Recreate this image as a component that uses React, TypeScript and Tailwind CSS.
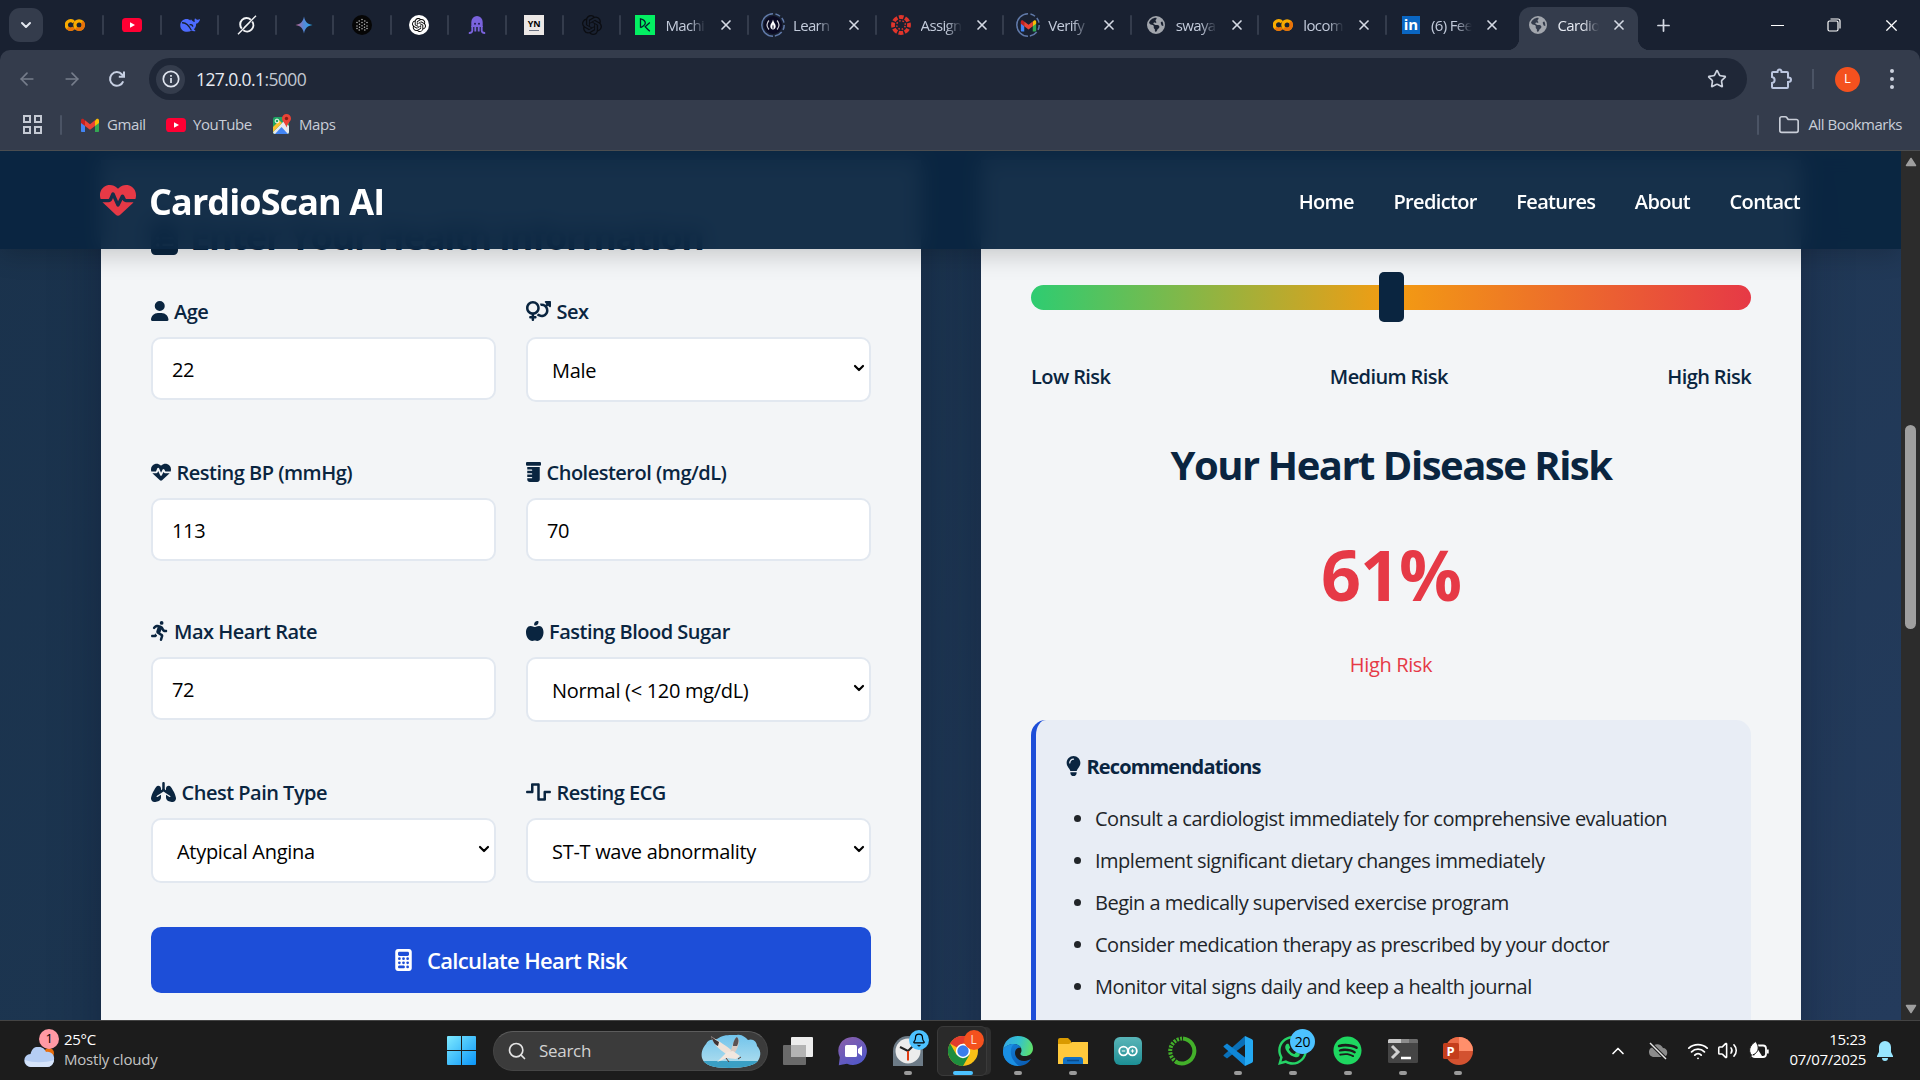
import React from "react";
import type { ReactNode } from "react";
import {
  FaHeartPulse, FaUser, FaVenusMars, FaPrescriptionBottle, FaPersonRunning, FaAppleWhole, FaLungs,
  FaWaveSquare, FaCalculator, FaLightbulb, FaSpotify, FaWhatsapp, FaEarthAmericas, FaClipboardList,
} from "react-icons/fa6";
import { SiOpenai } from "react-icons/si";
import { ChevronDown, ChevronUp, X, Plus, ArrowLeft, ArrowRight, Wifi, Volume2, Search, Folder, Star, Bell } from "lucide-react";

/* ---------- small drawings ---------- */

const Colab = () => (
  <svg viewBox="0 0 20 20" className="size-5 shrink-0" fill="none" strokeWidth="3.300">
    <path d="M8.900 7.200A4.300 4.300 0 1 0 8.900 12.800" stroke="#f9ab00" />
    <circle cx="14.100" cy="10" r="4.200" stroke="#f9ab00" />
    <path d="M17.100 7A4.200 4.200 0 0 1 11.100 13" stroke="#e8710a" />
    <path d="M2.600 13A4.300 4.300 0 0 0 8.700 13" stroke="#e8710a" />
  </svg>
);

const YouTube = () => (
  <svg viewBox="0 0 20 20" className="size-5 shrink-0">
    <rect y="3" width="20" height="14" rx="3.6" fill="#ff0033" />
    <path d="M8 7.2v5.6l5-2.8z" fill="#fff" />
  </svg>
);

const Whale = () => (
  <svg viewBox="0 0 20 20" className="size-5 shrink-0">
    <path d="M.3 10.500C.3 6.500 3.200 4 6.800 4c1.500 0 2.400.600 3.400 1.400l.8-1.100c.8 1.400 2.200 2.400 3.800 2.800-.2-1.500-.5-2.800.3-3.800.6.9 1.700 1.500 2.600 1.400.8-.1 1.300-.4 2.300-.8-.2 2.400-1.700 4.200-3.900 4.800.1 2.500-.8 4.200-2.200 5.600l1.700 1.600c-1.300.5-2.600.300-3.800-.3C6.500 18.600.3 16 .3 10.500z" fill="#4d6bfe" />
    <path d="M2 7.800c4.500-.5 7.300 3.500 9.300 7.500M9.600 9.800c1.700-.5 2.900.2 3.200 1.800" stroke="#192131" strokeWidth="1.300" fill="none" />
  </svg>
);

const Grok = () => (
  <svg viewBox="0 0 20 20" className="size-5 shrink-0" fill="none" stroke="#f2f3f5" strokeWidth="2">
    <path d="M13.800 4.800a6.300 6.300 0 0 0-9 8.800M6.300 15.200a6.300 6.300 0 0 0 8.900-8.700" />
    <path d="M19 .8L7 12.800M13 7L1 19.200" strokeWidth="1.400" />
  </svg>
);

const Gemini = () => (
  <svg viewBox="0 0 20 20" className="size-5 shrink-0">
    <defs>
      <linearGradient id="gem" x1="0" y1="0" x2="1" y2="0">
        <stop offset="0.1" stopColor="#b06a9a" />
        <stop offset="0.45" stopColor="#5b86d6" />
        <stop offset="0.9" stopColor="#2ba5e8" />
      </linearGradient>
    </defs>
    <path d="M10 1.500c.9 5 3 7.500 8.500 8.500-5.500 1-7.600 3.500-8.500 8.500-.9-5-3-7.500-8.500-8.500 5.500-1 7.600-3.500 8.500-8.500z" fill="url(#gem)" />
  </svg>
);

const Dots = () => (
  <svg viewBox="0 0 20 20" className="size-5 shrink-0">
    <circle cx="10" cy="10" r="10" fill="#060606" />
    {[[10, 4.500], [7.200, 6], [12.800, 6], [10, 7.600], [5, 7.600], [15, 7.600], [7.500, 9.200], [12.500, 9.200], [5, 11], [15, 11], [10, 10.700], [7.500, 12.300], [12.500, 12.300], [10, 13.800], [7.200, 15], [12.800, 15], [5, 13.600], [15, 13.600]].map(([x, y]) => (
      <circle key={x + "-" + y} cx={x} cy={y} r="0.750" fill="#b9b9b9" />
    ))}
  </svg>
);

const Octopus = () => (
  <svg viewBox="0 0 20 20" className="size-5 shrink-0">
    <path d="M4.300 7a5.700 5.900 0 0 1 11.400 0v5H4.300z" fill="#7a63dd" />
    <path d="M5.300 11v4.500c0 1.600-1.300 2.600-3.500 2.400M8.300 11v5.400M11.700 11v5.400M14.700 11v4.500c0 1.600 1.300 2.600 3.500 2.400" stroke="#7a63dd" strokeWidth="1.900" fill="none" />
    <circle cx="8" cy="8.800" r="1" fill="#221c4f" />
    <circle cx="12" cy="8.800" r="1" fill="#221c4f" />
  </svg>
);

const Gmail = () => (
  <svg viewBox="0 0 20 20" className="size-5 shrink-0">
    <path d="M1 6v10.200c0 .5.300.8.800.8H5V8.500z" fill="#4285f4" />
    <path d="M19 6v10.200c0 .5-.3.800-.8.800H15V8.500z" fill="#34a853" />
    <path d="M15 5.500L16.500 4C17.600 3.200 19 4 19 5.300V8l-4 3z" fill="#fbbc04" />
    <path d="M5 5.500L3.500 4C2.400 3.200 1 4 1 5.300V8l4 3z" fill="#c5221f" />
    <path d="M5 5.300l5 3.900 5-3.900V11l-5 3.800L5 11z" fill="#ea4335" />
  </svg>
);

const Maps = () => (
  <svg viewBox="0 0 20 22" className="h-[22px] w-5 shrink-0">
    <rect x="1" y="3" width="16" height="17" rx="2" fill="#1fa463" />
    <path d="M1 18L12 7l5 5v6a2 2 0 0 1-2 2H3a2 2 0 0 1-2-2z" fill="#e8eaed" />
    <path d="M3 20l6.500-7 6.500 7z" fill="#4285f4" />
    <path d="M1 13v5l9-9-2.500-2.500z" fill="#fbc02d" />
    <circle cx="5" cy="7" r="1.900" fill="none" stroke="#fff" strokeWidth="1" />
    <path d="M14.500 0a4.500 4.500 0 0 1 4.500 4.500c0 3-3 4-4.500 9-1.500-5-4.500-6-4.500-9A4.500 4.500 0 0 1 14.500 0z" fill="#ea4335" />
    <circle cx="14.500" cy="4.500" r="1.700" fill="#8a1c14" />
  </svg>
);

const Ring = ({ children }: { children: ReactNode }) => (
  <div className="relative -mx-0.5 grid size-6 shrink-0 place-items-center">
    <svg viewBox="0 0 24 24" className="absolute inset-0 size-6" fill="none" stroke="#6079a8" strokeWidth="1.500">
      <circle cx="12" cy="12" r="11.200" strokeDasharray="35 2.500 5 2.500 5 2.500 5 2.500 8 2.500" transform="rotate(90 12 12)" />
    </svg>
    {children}
  </div>
);

const Camp = () => (
  <svg viewBox="0 0 20 20" className="size-[18px]">
    <circle cx="10" cy="10" r="10" fill="#0a0a23" />
    <path d="M5.500 5c-2.600 3-2.600 7 0 10M14.500 5c2.600 3 2.600 7 0 10" stroke="#d0d0d5" strokeWidth="1.300" fill="none" />
    <path d="M10 4c.3 3 3 4.500 3 7.500 0 2-1.300 3.500-3 3.500s-3-1.500-3-3.500C7 8.500 9.700 7 10 4z" fill="#fff" />
    <path d="M10 9.500c.8 2 1 3.500 0 5.500-1-2-.8-3.500 0-5.500z" fill="#0a0a23" />
  </svg>
);

const Canvas = () => (
  <svg viewBox="0 0 20 20" className="size-5 shrink-0">
    <circle cx="10" cy="10" r="8" fill="none" stroke="#e0352b" strokeWidth="3.800" strokeDasharray="4.700 1.583" strokeDashoffset="2.350" />
    <circle cx="10" cy="10" r="4.300" fill="none" stroke="#e0352b" strokeWidth="1.500" strokeDasharray="1.500 1.877" strokeDashoffset="-1" />
  </svg>
);

const DataCamp = () => (
  <svg viewBox="0 0 20 20" className="size-5 shrink-0" fill="none">
    <rect width="20" height="20" fill="#03ef62" />
    <path d="M5.500 12.700V3.800c3 .7 4.800 2.200 4.800 4.200s-2 3.200-4.800 4.700M14.800 7.500l-4.600 4.200c1.500 1.500 2.800 3 4.600 4.600" stroke="#05192d" strokeWidth="1.300" />
  </svg>
);

const Globe = () => <FaEarthAmericas className="size-[18px] shrink-0 text-[#a2a6ad]" />;

const LinkedIn = () => (
  <div className="grid size-[18px] shrink-0 place-items-center bg-[#0a66c2] text-[15px] leading-none font-bold text-white">
    <span className="-mt-0.5">in</span>
  </div>
);

/* ---------- browser ---------- */

const pinned: ReactNode[] = [
  <Colab />, <YouTube />, <Whale />, <Grok />, <Gemini />, <Dots />,
  <div className="grid size-5 place-items-center rounded-full bg-white"><SiOpenai className="size-[14px] text-black" /></div>,
  <Octopus />,
  <div className="flex h-5 w-5 flex-col items-center bg-[#ece8e6] pt-1 text-[9px] leading-[9px] font-bold text-black">
    YN<span className="mt-0.5 h-px w-2.5 bg-gray-500" />
  </div>,
  <SiOpenai className="size-5 text-[#0b0d12]" />,
];

const tabs: [ReactNode, string][] = [
  [<DataCamp />, "Machi"],
  [<Ring><Camp /></Ring>, "Learn"],
  [<Canvas />, "Assign"],
  [<Ring><div className="grid size-[17px] place-items-center *:size-[17px]"><Gmail /></div></Ring>, "Verify"],
  [<Globe />, "swaya"],
  [<Colab />, "locom"],
  [<LinkedIn />, "(6) Fee"],
];

const TabBody = ({ icon, label }: { icon: ReactNode; label: string }) => (
  <>
    <div className="flex w-5 shrink-0 justify-center">{icon}</div>
    <span className="ml-2.5 w-[41px] shrink-0 overflow-hidden text-[15px] tracking-[-0.65px] whitespace-nowrap [mask-image:linear-gradient(to_right,#000_60%,transparent)]">{label}</span>
    <X className="ml-[12px] size-4 shrink-0 text-[#d5dae4]" strokeWidth={2.500} />
  </>
);

function TabStrip() {
  return (
    <div className="flex h-[50px] items-stretch bg-[#192131] text-[#c3cbdb]">
      <div className="ml-[9px] flex w-[38px] items-center">
        <div className="grid h-[34px] w-[34px] place-items-center rounded-[11px] bg-[#343c4c]">
          <ChevronDown className="size-4 text-[#e4e8f0]" strokeWidth={3} />
        </div>
      </div>
      {pinned.map((icon, i) => (
        <div key={i} className="flex w-[57.45px] items-center">
          <div className="flex flex-1 justify-center">{icon}</div>
          <div className="h-5 w-0.5 rounded bg-[#343c4c]" />
        </div>
      ))}
      {tabs.map(([icon, label], i) => (
        <div key={label} className="flex w-[127.6px] items-center pl-[14px]">
          <TabBody icon={icon} label={label} />
          {i < 6 && <div className="ml-auto h-5 w-0.5 rounded bg-[#343c4c]" />}
        </div>
      ))}
      <div className="relative mt-[7px] ml-1 flex w-[119px] items-center rounded-t-[12px] bg-[#343c4c] pb-[7px] pl-[9px] text-[#e6eaf2]">
        <div className="absolute bottom-0 -left-3 size-3 bg-[radial-gradient(circle_at_0_0,#192131_12px,#343c4c_12.500px)]" />
        <div className="absolute -right-3 bottom-0 size-3 bg-[radial-gradient(circle_at_100%_0,#192131_12px,#343c4c_12.500px)]" />
        <TabBody icon={<Globe />} label="Cardio" />
      </div>
      <div className="flex w-[52px] items-center justify-center"><Plus className="size-[19px] text-[#d5dae4]" strokeWidth={2.200} /></div>
      <div className="ml-auto flex items-center text-white">
        <div className="flex w-[58px] justify-center"><div className="h-px w-[13px] bg-white" /></div>
        <div className="flex w-[56px] justify-center">
          <svg viewBox="0 0 14 14" className="size-[14px]" fill="none" stroke="currentColor" strokeWidth="1.200">
            <rect x="1" y="3" width="10" height="10" rx="1.500" />
            <path d="M3.500 1h7.500a2 2 0 0 1 2 2v7.500" />
          </svg>
        </div>
        <div className="flex w-[58px] justify-center"><X className="size-[19px]" strokeWidth={1.500} /></div>
      </div>
    </div>
  );
}

function Toolbar() {
  return (
    <div className="bg-[#192131]">
      <div className="h-[100px] rounded-t-[10px] bg-[#343c4c] text-[#cdd3df]">
        <div className="flex h-[58px] items-center">
          <ArrowLeft className="ml-[17px] size-5 text-[#767d8b]" strokeWidth={2} />
          <ArrowRight className="ml-[25px] size-5 text-[#767d8b]" strokeWidth={2} />
          <svg viewBox="0 0 20 20" className="ml-[25px] size-5" fill="none" stroke="#c6cfe2" strokeWidth="2">
            <path d="M16.200 12.300A6.800 6.800 0 1 1 15 5.500l2 2M17 2.500v5.200h-5.200" />
          </svg>
          <div className="ml-[22px] flex h-[42px] w-[1598px] items-center rounded-full bg-[#1f2737]">
            <div className="ml-[7px] grid size-[29px] place-items-center rounded-full bg-[#343c4c]">
              <svg viewBox="0 0 18 18" className="size-[18px]" fill="none" stroke="#dfe4ee" strokeWidth="1.700">
                <circle cx="9" cy="9" r="7.700" />
                <path d="M9 8v5M9 5v1.700" />
              </svg>
            </div>
            <span className="ml-[11px] text-[17.500px] tracking-[-0.600px] text-[#e8ebf2]">127.0.0.1<span className="text-[#c2c7d1]">:5000</span></span>
            <Star className="mr-5 ml-auto size-5" strokeWidth={2} />
          </div>
          <svg viewBox="0 0 24 24" className="ml-[22px] size-6" fill="none" stroke="#bcc7e0" strokeWidth="2">
            <path d="M4 5h4.500c0-3.500 4-3.500 4 0H18a1 1 0 0 1 1 1v4.500c4 0 4 4.500 0 4.500v5a1 1 0 0 1-1 1H4a1 1 0 0 1-1-1v-4c3.500-.5 3.500-5.500 0-6V6a1 1 0 0 1 1-1z" />
          </svg>
          <div className="ml-[19px] h-5 w-0.5 bg-[#4b5465]" />
          <div className="ml-[21px] grid size-[25px] place-items-center rounded-full bg-[#f4511e] text-[13px] text-white">L</div>
          <div className="ml-[30px] flex flex-col gap-[4px]">
            {[0, 1, 2].map((i) => <div key={i} className="size-1 rounded-full bg-[#cdd3df]" />)}
          </div>
        </div>
        <div className="flex h-[33px] items-center text-[15px] tracking-[-0.400px] text-[#c9ced8]">
          <div className="ml-[23px] grid grid-cols-2 gap-[3px]">
            {[0, 1, 2, 3].map((i) => <div key={i} className="size-[8px] border-2 border-[#c5cad4]" />)}
          </div>
          <div className="ml-[18px] h-5 w-0.5 rounded bg-[#4b5465]" />
          <div className="ml-[18px] flex w-[86px] items-center gap-[7px]"><Gmail />Gmail</div>
          <div className="flex w-[106px] items-center gap-[7px]"><YouTube />YouTube</div>
          <div className="flex items-center gap-[7px]"><Maps />Maps</div>
          <div className="ml-auto h-5 w-0.5 rounded bg-[#4b5465]" />
          <Folder className="ml-[19px] size-[22px]" strokeWidth={1.800} />
          <span className="mr-[18px] ml-[9px] tracking-[-0.500px]">All Bookmarks</span>
        </div>
      </div>
      <div className="h-px bg-[#4b4d50]" />
    </div>
  );
}

/* ---------- page ---------- */

function Label({ icon, text }: { icon: ReactNode; text: string }) {
  return (
    <div className="mb-[10px] flex h-[30px] items-center gap-[5.5px] text-xl font-semibold tracking-[-0.500px] text-[#0a2540] [&>svg]:-translate-y-px">
      {icon}<span>{text}</span>
    </div>
  );
}

function Field({ icon, label, value, select }: { icon: ReactNode; label: string; value: string; select?: boolean }) {
  return (
    <div>
      <Label icon={icon} text={label} />
      {select ? (
        <div className="flex h-[65px] items-center justify-between rounded-[10px] border-2 border-[#e2e8f0] bg-white pt-0.5 pr-[2px] pl-6 text-xl tracking-[-0.300px] text-black">
          <span>{value}</span>
          <ChevronDown className="size-4 -translate-y-[3px]" strokeWidth={3.200} />
        </div>
      ) : (
        <div className="flex h-[63px] items-center rounded-[10px] border-2 border-[#e2e8f0] bg-white pt-0.5 pl-[19px] text-xl tracking-[-0.350px] text-black">{value}</div>
      )}
    </div>
  );
}

const fields: { icon: ReactNode; label: string; value: string; select?: boolean }[] = [
  { icon: <FaUser className="h-5 w-[17.5px]" />, label: "Age", value: "22" },
  { icon: <FaVenusMars className="h-5 w-[25px]" />, label: "Sex", value: "Male", select: true },
  { icon: <FaHeartPulse className="h-5 w-5" />, label: "Resting BP (mmHg)", value: "113" },
  { icon: <FaPrescriptionBottle className="h-5 w-[15px]" />, label: "Cholesterol (mg/dL)", value: "70" },
  { icon: <FaPersonRunning className="h-5 w-[17.5px]" />, label: "Max Heart Rate", value: "72" },
  { icon: <FaAppleWhole className="h-5 w-[17.5px]" />, label: "Fasting Blood Sugar", value: "Normal (< 120 mg/dL)", select: true },
  { icon: <FaLungs className="h-5 w-[25px]" />, label: "Chest Pain Type", value: "Atypical Angina", select: true },
  { icon: <FaWaveSquare className="h-5 w-[25px]" />, label: "Resting ECG", value: "ST-T wave abnormality", select: true },
];

const tips = [
  "Consult a cardiologist immediately for comprehensive evaluation",
  "Implement significant dietary changes immediately",
  "Begin a medically supervised exercise program",
  "Consider medication therapy as prescribed by your doctor",
  "Monitor vital signs daily and keep a health journal",
];

function Page() {
  return (
    <div className="relative h-full flex-1 overflow-hidden bg-[linear-gradient(135deg,#1a324c_0%,#1c3550_35%,#243b5c_100%)]">
      <main className="flex gap-[60px] pt-[9px] pl-[101px]">
        <section className="h-[1100px] w-[820px] bg-[#f3f5f7] px-[50px] pt-[53px] shadow-[0_15px_45px_rgba(10,16,40,0.350)]">
          <h2 className="mb-[36px] flex h-12 items-center gap-[12px] text-[36px] font-bold tracking-[-1.200px] text-[#0a2540]">
            <FaClipboardList className="h-9 w-[27px]" />Enter Your Health Information
          </h2>
          <div className="grid grid-cols-[345px_345px] gap-x-[30px] gap-y-[56px]">
            {fields.map((f) => <Field key={f.label} {...f} />)}
          </div>
          <div className="mt-11 flex h-[66px] items-center justify-center gap-[15px] rounded-[10px] bg-[#1d4ed8] pt-px text-[22px] font-semibold tracking-[-0.650px] text-white">
            <FaCalculator className="h-[22px] w-[17px] -translate-y-px" />Calculate Heart Risk
          </div>
        </section>
        <section className="h-[1100px] w-[820px] bg-[#f3f5f7] px-[50px] pt-[112px] text-[#0a2540] shadow-[0_15px_45px_rgba(10,16,40,0.350)]">
          <div className="flex h-[50px] items-center">
            <div className="flex h-[25px] w-full items-center justify-center rounded-full bg-[linear-gradient(90deg,#2ecc71,#f39c12,#e63946)]">
              <div className="h-[50px] w-[25px] shrink-0 rounded-[5px] bg-[#0a2540]" />
            </div>
          </div>
          <div className="mt-[40px] flex h-[30px] items-center justify-between text-xl font-semibold tracking-[-0.600px]">
            <span>Low Risk</span><span>Medium Risk</span><span>High Risk</span>
          </div>
          <h2 className="mt-[43px] text-center text-[40px] leading-[60px] font-bold tracking-[-1.500px]">Your Heart Disease Risk</h2>
          <div className="mt-[29px] text-center text-[70px] leading-[100px] font-bold tracking-[-1px] text-[#e63946]">61%</div>
          <div className="mt-[26px] text-center text-xl leading-[30px] tracking-[-0.350px] text-[#e63946]">High Risk</div>
          <div className="mt-[40px] h-[400px] rounded-[15px] border-l-[5px] border-[#1d4ed8] bg-[#e8edf5] pt-[32px] pl-[30px]">
            <div className="flex h-[30px] items-center gap-[5.5px] text-xl font-bold tracking-[-0.850px]">
              <FaLightbulb className="h-5 w-[15px] -translate-y-px" />Recommendations
            </div>
            <ul className="mt-[16px] list-disc pl-[29px] text-xl leading-[42px] tracking-[-0.500px] text-[#212529]">
              {tips.map((t) => <li key={t}>{t}</li>)}
            </ul>
          </div>
        </section>
      </main>
      <header className="absolute inset-x-0 top-0 flex h-[98px] items-center bg-[#0a2540]/95 pr-[101px] pl-[100px] shadow-[0_5px_25px_rgba(0,0,0,0.200)] backdrop-blur-[10px]">
        <FaHeartPulse className="size-[36px] text-[#e63946]" />
        <span className="mt-[3px] ml-[13px] text-[36px] font-bold tracking-[-0.900px] text-white">CardioScan AI</span>
        <nav className="mt-[3px] ml-auto flex gap-[39.5px] text-xl font-semibold tracking-[-0.650px] text-white">
          {["Home", "Predictor", "Features", "About", "Contact"].map((n) => <span key={n}>{n}</span>)}
        </nav>
      </header>
    </div>
  );
}

function Scrollbar() {
  return (
    <div className="flex h-full w-[19px] flex-col items-center justify-between bg-[#2c2c2c] py-[6px]">
      <svg viewBox="0 0 12 10" className="h-2.5 w-3" fill="#9f9f9f" stroke="#9f9f9f" strokeWidth="1.500"><path d="M6 1.500l4.500 7h-9z" strokeLinejoin="round" /></svg>
      <div className="flex w-full flex-1 justify-center pt-[258px]"><div className="h-[204px] w-[11px] rounded-full bg-[#9f9f9f]" /></div>
      <svg viewBox="0 0 12 10" className="h-2.5 w-3" fill="#9f9f9f" stroke="#9f9f9f" strokeWidth="1.500"><path d="M6 8.500l4.500-7h-9z" strokeLinejoin="round" /></svg>
    </div>
  );
}

/* ---------- taskbar ---------- */

const TaskView = () => (
  <svg viewBox="0 0 30 30" className="size-[30px]">
    <rect x="8" y="1" width="22" height="20" rx="1" fill="#ededed" />
    <rect x="0" y="9" width="23" height="20" rx="1" fill="#6a6a6a" />
    <path d="M8 9h15v12H8z" fill="#b4b4b4" />
  </svg>
);

const Chat = () => (
  <svg viewBox="0 0 30 30" className="size-[30px]">
    <defs><linearGradient id="chat" x1="0" y1="0" x2="0.6" y2="1"><stop offset="0" stopColor="#8d5fa8" /><stop offset="1" stopColor="#5358c8" /></linearGradient></defs>
    <path d="M15 1a14 14 0 1 1-6 26.700L.8 29.300l1-8A14 14 0 0 1 15 1z" fill="url(#chat)" />
    <rect x="7" y="9" width="12" height="12" rx="1.500" fill="#fff" />
    <path d="M20 13l4-3v10l-4-3z" fill="#fff" />
  </svg>
);

const Clock = () => (
  <div className="relative">
    <svg viewBox="0 0 30 30" className="size-[30px]">
      <path d="M0 15A15 15 0 0 1 30 15V30H0z" fill="#6d7b87" />
      <circle cx="15" cy="15" r="12.500" fill="#ececec" />
      <path d="M7 11l8 4 5-5" stroke="#222" strokeWidth="2" fill="none" />
      <path d="M15 15v9.500" stroke="#e03c12" strokeWidth="2" />
    </svg>
    <div className="absolute -top-1.5 left-4 grid size-5 place-items-center rounded-full bg-[#4cc2ff]"><Bell className="size-[14px] text-black" strokeWidth={2} /></div>
  </div>
);

const Chrome = () => (
  <div className="relative">
    <svg viewBox="0 0 30 30" className="size-[30px]">
      <circle cx="15" cy="15" r="15" fill="#fbc116" />
      <path d="M15 15L2 7.500A15 15 0 0 1 28 7.500H15z" fill="#e33b2e" />
      <path d="M2 7.500A15 15 0 0 0 15 30l6.500-11.200L15 15 8.500 18.800z" fill="#1e8e3e" />
      <circle cx="15" cy="15" r="7.200" fill="#fff" />
      <circle cx="15" cy="15" r="5.700" fill="#3b7ded" />
    </svg>
    <div className="absolute -top-1.5 left-4 grid size-5 place-items-center rounded-full bg-[#f4511e] text-xs text-[#ffe0d6]">L</div>
  </div>
);

const Edge = () => (
  <svg viewBox="0 0 30 30" className="size-[30px]">
    <defs>
      <linearGradient id="e1" x1="0" y1="0.3" x2="1" y2="0.500"><stop offset="0" stopColor="#35a6e6" /><stop offset="0.5" stopColor="#33c2cf" /><stop offset="1" stopColor="#5fe06a" /></linearGradient>
      <linearGradient id="e2" x1="0" y1="0" x2="0.5" y2="1"><stop offset="0" stopColor="#1580d8" /><stop offset="1" stopColor="#0b61b8" /></linearGradient>
    </defs>
    <path d="M0 14C1 5 7 0 15 0c9 0 15 6 15 12.500 0 5-4 7.500-8 7.500-3 0-5-1-4.500-2.500C20 14 18 8 11 8 6 8 2 10.500 0 14z" fill="url(#e1)" />
    <path d="M0 14C2 10.500 6 8 11 8c3.500 0 6 1.500 7 4-3-1-6 1-6 5 0 5 5 8.500 10 8 2-.2 4-1 6-2-2.500 4.500-7.500 7-13 7C6 30-.7 23 0 14z" fill="url(#e2)" />
    <path d="M11 8c-4 3-6 14 5 22C6 30-.7 23 0 14 2 10.500 6 8 11 8z" fill="#1a8fe3" />
  </svg>
);

const Explorer = () => (
  <svg viewBox="0 0 30 30" className="size-[30px]">
    <path d="M0 4a2 2 0 0 1 2-2h8l3 3v6H0z" fill="#d99a00" />
    <path d="M0 8h11l3-2h16v22H0z" fill="#ffc93c" />
    <path d="M5 28v-4a3 3 0 0 1 3-3h14a3 3 0 0 1 3 3v4z" fill="#1170c4" />
    <path d="M9 24.500h12" stroke="#0a4a8a" strokeWidth="1.500" />
  </svg>
);

const Arduino = () => (
  <div className="grid size-[28px] place-items-center rounded-[6px] bg-gradient-to-b from-[#58b5b8] to-[#1a8f95]">
    <svg viewBox="0 0 22 12" className="w-[22px]" fill="none" stroke="#fff" strokeWidth="1.800">
      <circle cx="6.500" cy="6" r="4.300" /><circle cx="15.500" cy="6" r="4.300" /><path d="M4.800 6h3.400M13.800 6h3.400M15.500 4.300v3.400" strokeWidth="1.100" />
    </svg>
  </div>
);

const Anaconda = () => (
  <svg viewBox="0 0 30 30" className="size-[30px]" fill="none" stroke="#43b02a">
    <path d="M15 2.500A12.500 12.500 0 1 1 8 26" strokeWidth="4" />
    <path d="M9 26.200A12.500 12.500 0 0 1 14 2.600" strokeWidth="4" strokeDasharray="2.200 1.200" />
  </svg>
);

const VSCode = () => (
  <svg viewBox="0 0 30 30" className="size-[30px]">
    <path d="M22 0v8.500L4 22.500l-3-2.200a1 1 0 0 1 0-1.600z" fill="#0a70b8" />
    <path d="M1 9.700l3-2.200 18 14V30L1 11.300a1 1 0 0 1 0-1.600z" fill="#0f86d6" />
    <path d="M22 0l7 3.300c.6.300 1 .9 1 1.600v20.200c0 .7-.4 1.300-1 1.600L22 30z" fill="#24a9f2" />
  </svg>
);

const WhatsApp = () => (
  <div className="relative">
    <FaWhatsapp className="size-[33px] text-[#25d366]" />
    <div className="absolute -top-[5px] left-[14px] grid size-[25px] place-items-center rounded-full bg-[#4cc2ff] text-sm tracking-tight text-black">20</div>
  </div>
);

const Terminal = () => (
  <svg viewBox="0 0 30 30" className="size-[30px]">
    <rect y="3" width="30" height="24" rx="1.500" fill="#454545" />
    <path d="M0 4.500A1.500 1.500 0 0 1 1.500 3H13v4H0z" fill="#c9c9c9" />
    <path d="M13 3h8v4h-8z" fill="#8c8c8c" /><path d="M21 3h7.500A1.500 1.500 0 0 1 30 4.500V7h-9z" fill="#6d6d6d" />
    <path d="M4 10l6 6-6 6" stroke="#d0d0d0" strokeWidth="3" fill="none" />
    <path d="M13 22h10" stroke="#fff" strokeWidth="2.500" />
  </svg>
);

const PowerPoint = () => (
  <div className="relative grid size-[30px] place-items-center">
    <svg viewBox="0 0 30 30" className="size-[30px]">
      <circle cx="16" cy="15" r="14" fill="#d35230" />
      <path d="M16 1a14 14 0 0 1 14 14H16z" fill="#ff8f6b" />
      <path d="M16 1a14 14 0 0 0-14 14h14z" fill="#ed6c47" />
      <rect y="7" width="16" height="16" rx="1.500" fill="#c43e1c" />
    </svg>
    <span className="absolute top-[7px] left-1 text-[13px] leading-4 font-bold text-white">P</span>
  </div>
);

const SearchArt = () => (
  <svg viewBox="0 0 60 34" className="h-[34px] w-[60px]">
    <defs>
      <clipPath id="cloud"><path d="M5 10c3-6 9-4 11-5 6-5 14-4 20-4 5-1 9 3 11 5 5-2 9 2 9 6 4 4 4 9 2 13-2 6-14 9-30 9S3 31 1 24c-1-5 0-9 4-14z" /></clipPath>
      <linearGradient id="sky" x1="0" y1="0" x2="0" y2="1"><stop offset="0" stopColor="#6fc3ec" /><stop offset="1" stopColor="#b5e0ee" /></linearGradient>
    </defs>
    <g clipPath="url(#cloud)">
      <path d="M0 0h60v34H0z" fill="url(#sky)" />
      <path d="M0 27h60v7H0z" fill="#3a9fc4" />
    </g>
    <path d="M10 2c2 8 8 13 15 18l6-3C27 12 18 8 10 2z" fill="#efe2d8" />
    <path d="M10 2c2 6 4 9 7 10l1-4C15 6 13 5 10 2z" fill="#3d3335" />
    <path d="M29 19c2-5 3-12 7-16 4 4 1 12-4 18z" fill="#d8cbc4" /><path d="M32 12c0-4 2-8 4-9 2 2 2 5 0 9z" fill="#5a5254" />
    <path d="M16 28l10-10 6-1 7 5-4 3-9-1z" fill="#f2e7df" />
    <path d="M37 25l3-2M25 24l3 4" stroke="#5c3a2e" strokeWidth="1" />
  </svg>
);

const apps: { icon: ReactNode; run?: boolean; active?: boolean }[] = [
  { icon: <TaskView /> }, { icon: <Chat /> }, { icon: <Clock />, run: true }, { icon: <Chrome />, active: true },
  { icon: <Edge />, run: true }, { icon: <Explorer />, run: true }, { icon: <Arduino /> }, { icon: <Anaconda /> },
  { icon: <VSCode />, run: true }, { icon: <WhatsApp />, run: true },
  { icon: <FaSpotify className="size-[29px] text-[#1ed760]" />, run: true },
  { icon: <Terminal />, run: true }, { icon: <PowerPoint />, run: true },
];

function Taskbar() {
  return (
    <div className="flex h-[60px] items-center border-t border-[#444] bg-[#1c1c1c] text-[15px] tracking-[-0.300px] text-white">
      <div className="relative ml-6 h-9 w-[34px]">
        <svg viewBox="0 0 34 38" className="h-[38px] w-[34px]">
          <circle cx="25" cy="20" r="5" fill="#e86c0a" />
          <path d="M7 34a6.500 6.500 0 0 1-.5-13C8 15 11 13.500 15 14c4 0 6 2.500 7 5 5-1 9 3 8 8-.5 4-3 7-7 7z" fill="#b5cdf3" />
          <path d="M7 34a6.500 6.500 0 0 1-6-7c8 3 20 3 29 0-.5 4-3 7-7 7z" fill="#d6e4fa" />
        </svg>
        <div className="absolute -top-[4px] left-[15px] grid size-5 place-items-center rounded-full bg-[#ff99a4] text-[13px] text-black">1</div>
      </div>
      <div className="mb-[3px] ml-1.5 w-[383px] leading-5">
        <div>25°C</div>
        <div className="tracking-[-0.200px] text-[#c4c4c4]">Mostly cloudy</div>
      </div>
      <svg viewBox="0 0 29 29" className="size-[29px]">
        <defs><linearGradient id="win" x1="0" y1="0" x2="1" y2="1"><stop offset="0" stopColor="#7eeaff" /><stop offset="1" stopColor="#0a95f8" /></linearGradient></defs>
        <path d="M1 0h13v14H0V1a1 1 0 0 1 1-1zM15 0h13a1 1 0 0 1 1 1v13H15zM0 15h14v14H1a1 1 0 0 1-1-1zM15 15h14v13a1 1 0 0 1-1 1H15z" fill="url(#win)" />
      </svg>
      <div className="ml-[17px] flex h-10 w-[275px] items-center rounded-full border border-t-[#5c5c5c] border-r-[#454545] border-b-[#454545] border-l-[#454545] bg-[#3b3b3b] pl-[13px]">
        <Search className="size-5 text-[#e4e4e4]" strokeWidth={2} />
        <span className="ml-3 text-[17px] text-[#d2d2d2]">Search</span>
        <div className="mr-[6px] ml-auto"><SearchArt /></div>
      </div>
      <div className="ml-[2px] flex">
        {apps.map((a, i) => (
          <div key={i} className="relative grid h-[50px] w-[55px] place-items-center">
            {a.active && <div className="absolute inset-y-0 left-[2px] w-[50px] rounded-md border border-[#3a3a3a] bg-[#2a2a2a] shadow-[5px_0_0_-1px_#2f2f2f]" />}
            <div className="relative">{a.icon}</div>
            {a.run && <div className="absolute bottom-[1px] h-1 w-2 rounded-full bg-[#9a9a9a]" />}
            {a.active && <div className="absolute bottom-[1px] h-1 w-5 rounded-full bg-[#4cc2ff]" />}
          </div>
        ))}
      </div>
      <div className="ml-auto flex items-center">
        <ChevronUp className="size-5" strokeWidth={2} />
        <svg viewBox="0 0 22 22" className="ml-[19px] size-[22px]">
          <path d="M6 17a5 5 0 0 1-1-9.500C7 3 14 3 16 8c5 0 6 8 1 9z" fill="#8b8b8b" />
          <path d="M3 3l16 16" stroke="#1c1c1c" strokeWidth="3.500" /><path d="M3 3l16 16" stroke="#e8e8e8" strokeWidth="1.400" />
        </svg>
        <Wifi className="ml-[18px] size-[22px]" strokeWidth={2} />
        <Volume2 className="ml-2 size-[21px]" strokeWidth={1.800} />
        <svg viewBox="0 0 22 22" className="ml-[9px] size-[22px]" fill="none" stroke="#fff" strokeWidth="1.800">
          <rect x="5" y="5.500" width="14" height="11.500" rx="3" /><path d="M20.800 9.500v4" />
          <path d="M10 8l-3 8h8z" fill="#fff" stroke="none" />
          <path d="M2.500 18.500l2-3.500C1 11 2.500 5.500 8.500 1.500c4 4.500 4 11-3 13.500" fill="#fff" stroke="#1c1c1c" strokeWidth="1" />
        </svg>
        <div className="mb-[3px] ml-5 text-right leading-5">
          <div>15:23</div>
          <div>07/07/2025</div>
        </div>
        <svg viewBox="0 0 18 22" className="mr-[26px] ml-[10px] h-[22px] w-[18px]" fill="#98e6ff">
          <path d="M9 1a6 6 0 0 1 6 6v5l2 4v1H1v-1l2-4V7a6 6 0 0 1 6-6zM6 18h6a3 3 0 0 1-6 0z" />
        </svg>
      </div>
    </div>
  );
}

export default function App() {
  return (
    <div className="flex h-[1080px] w-[1920px] flex-col overflow-hidden font-['Open_Sans',sans-serif]">
      <TabStrip />
      <Toolbar />
      <div className="flex h-[869px] shrink-0">
        <Page />
        <Scrollbar />
      </div>
      <Taskbar />
    </div>
  );
}
